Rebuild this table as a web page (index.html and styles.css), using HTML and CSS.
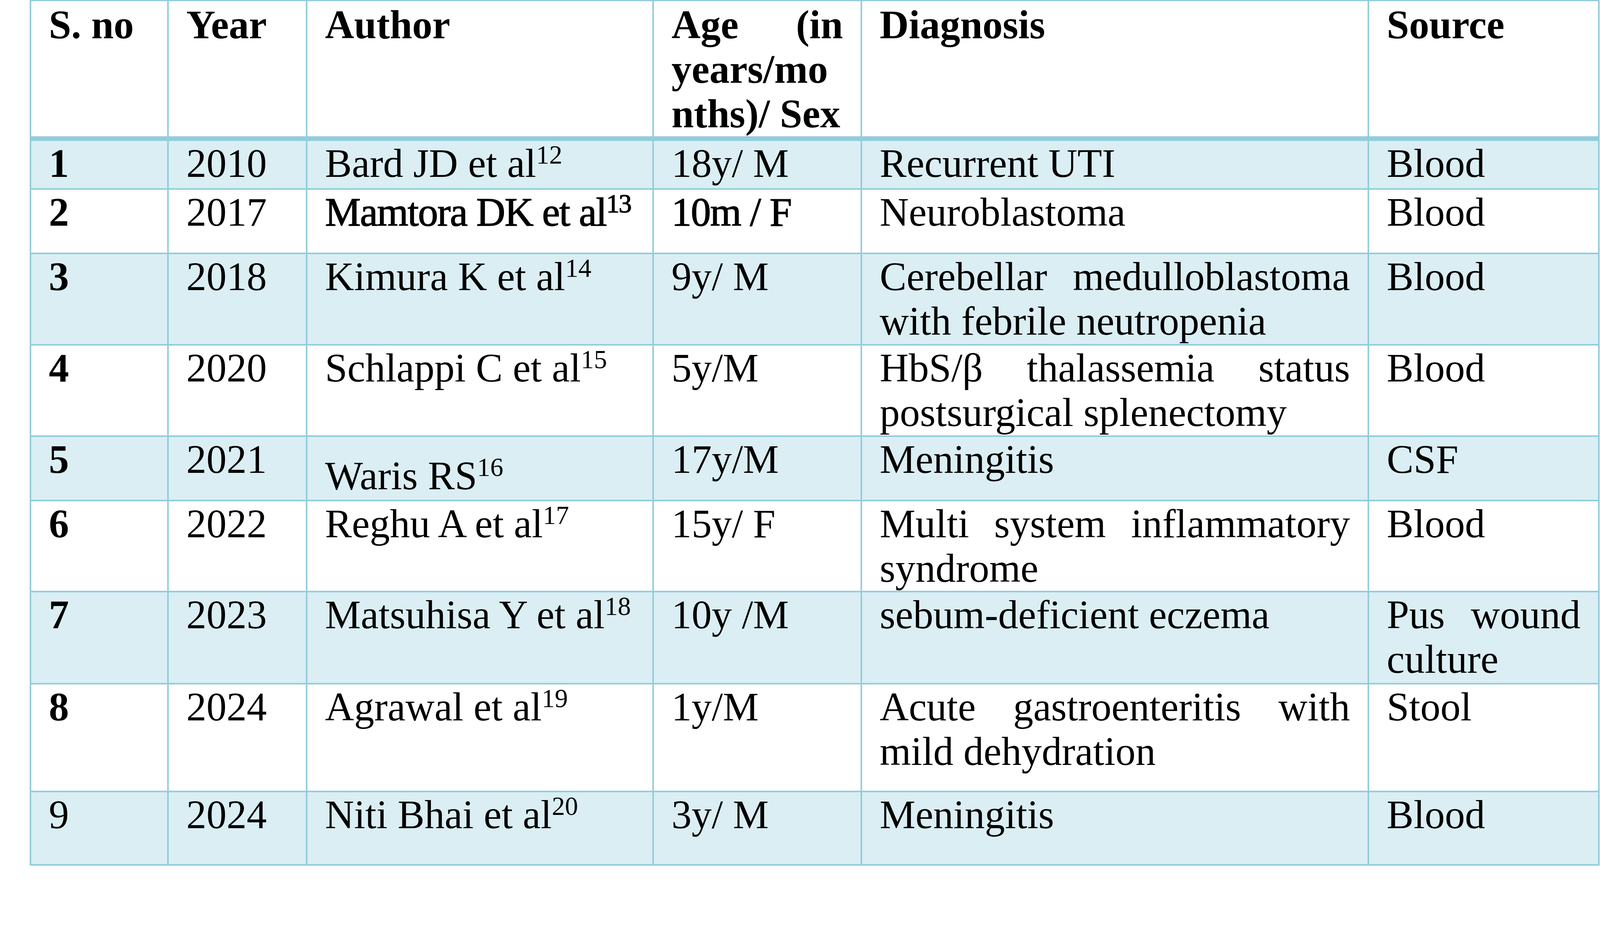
FILE: index.html
```html
<!DOCTYPE html>
<html lang="en">
<head>
<meta charset="utf-8">
<title>Case reports table</title>
<link rel="stylesheet" href="styles.css">
</head>
<body>
<div class="page">
  <div class="table">
    <div class="row head">
      <div class="cell">S. no</div>
      <div class="cell">Year</div>
      <div class="cell">Author</div>
      <div class="cell">Age (in years/mo<wbr>nths)/ Sex</div>
      <div class="cell">Diagnosis</div>
      <div class="cell">Source</div>
    </div>
    <div class="row band">
      <div class="cell num">1</div>
      <div class="cell">2010</div>
      <div class="cell">Bard JD et al<sup>12</sup></div>
      <div class="cell">18y/ M</div>
      <div class="cell">Recurrent UTI</div>
      <div class="cell">Blood</div>
    </div>
    <div class="row">
      <div class="cell num">2</div>
      <div class="cell">2017</div>
      <div class="cell heavy">Mamtora DK et al<sup>13</sup></div>
      <div class="cell heavy">10m / F</div>
      <div class="cell">Neuroblastoma</div>
      <div class="cell">Blood</div>
    </div>
    <div class="row band">
      <div class="cell num">3</div>
      <div class="cell">2018</div>
      <div class="cell">Kimura K et al<sup>14</sup></div>
      <div class="cell">9y/ M</div>
      <div class="cell">Cerebellar medulloblastoma with febrile neutropenia</div>
      <div class="cell">Blood</div>
    </div>
    <div class="row">
      <div class="cell num">4</div>
      <div class="cell">2020</div>
      <div class="cell">Schlappi C et al<sup>15</sup></div>
      <div class="cell">5y/M</div>
      <div class="cell">HbS/β thalassemia status postsurgical splenectomy</div>
      <div class="cell">Blood</div>
    </div>
    <div class="row band">
      <div class="cell num">5</div>
      <div class="cell">2021</div>
      <div class="cell low">Waris RS<sup>16</sup></div>
      <div class="cell">17y/M</div>
      <div class="cell">Meningitis</div>
      <div class="cell">CSF</div>
    </div>
    <div class="row">
      <div class="cell num">6</div>
      <div class="cell">2022</div>
      <div class="cell">Reghu A et al<sup>17</sup></div>
      <div class="cell">15y/ F</div>
      <div class="cell">Multi system inflammatory syndrome</div>
      <div class="cell">Blood</div>
    </div>
    <div class="row band">
      <div class="cell num">7</div>
      <div class="cell">2023</div>
      <div class="cell">Matsuhisa Y et al<sup>18</sup></div>
      <div class="cell">10y /M</div>
      <div class="cell">sebum-deficient eczema</div>
      <div class="cell">Pus wound culture</div>
    </div>
    <div class="row">
      <div class="cell num">8</div>
      <div class="cell">2024</div>
      <div class="cell">Agrawal et al<sup>19</sup></div>
      <div class="cell">1y/M</div>
      <div class="cell">Acute gastroenteritis with mild dehydration</div>
      <div class="cell">Stool</div>
    </div>
    <div class="row band">
      <div class="cell">9</div>
      <div class="cell">2024</div>
      <div class="cell">Niti Bhai et al<sup>20</sup></div>
      <div class="cell">3y/ M</div>
      <div class="cell">Meningitis</div>
      <div class="cell">Blood</div>
    </div>
  </div>
</div>
</body>
</html>
```
FILE: styles.css
```css
html, body {
  margin: 0;
  padding: 0;
  background: #ffffff;
}

.page {
  width: 4162px;
  height: 2433px;
  padding-left: 76px;
  box-sizing: border-box;
  font-family: "Liberation Serif", "Times New Roman", serif;
  font-size: 103px;
  line-height: 114px;
  color: #000000;
}

.table {
  display: grid;
  width: max-content;
  grid-template-columns: 352px 355px 887px 533px 1298px 590px;
  grid-template-rows: 358px 125px 165px 234px 234px 165px 233px 236px 276px 188px;
  border-left: 4px solid #92cddc;
  border-top: 3px solid #92cddc;
}

.row {
  display: contents;
}

.cell {
  box-sizing: border-box;
  border-right: 4px solid #92cddc;
  border-bottom: 4px solid #92cddc;
  padding: 0 45px;
  text-align: justify;
  background: #ffffff;
}

.band > .cell {
  background: #daeef3;
}

.head > .cell {
  font-weight: bold;
  border-bottom-width: 12px;
  padding-top: 3px;
}

.num {
  font-weight: bold;
}

.heavy {
  -webkit-text-stroke: 1.6px #000000;
  letter-spacing: -2px;
}

.low {
  padding-top: 42px;
}

sup {
  font-size: 67px;
  line-height: 0;
  vertical-align: 34px;
}
```
